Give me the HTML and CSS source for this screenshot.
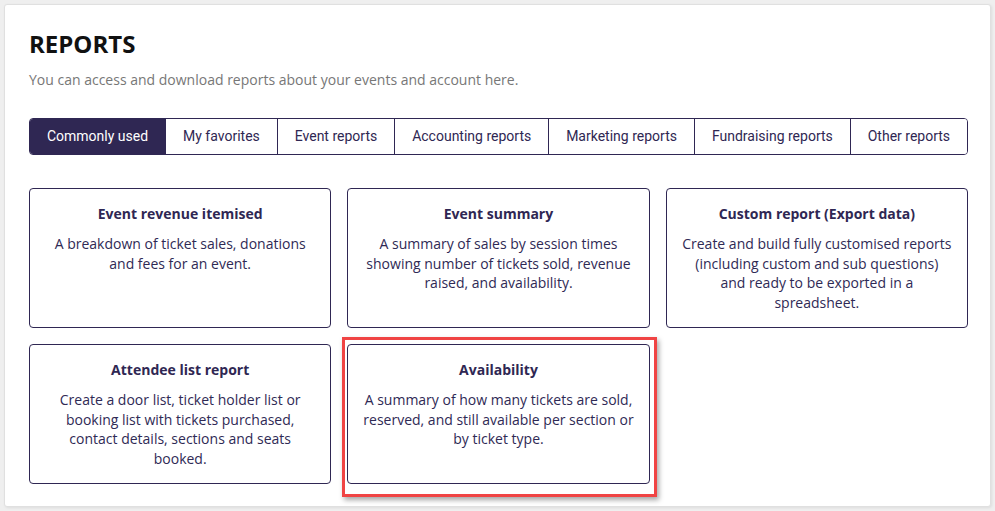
FILE: index.html
```html
<!DOCTYPE html>
<html lang="en">
<head>
    <meta charset="UTF-8">
    <meta name="viewport" content="width=device-width, initial-scale=1.0">
    <title>Reports</title>
    <link rel="stylesheet" href="styles.css">
</head>
<body>

    <div class="panel">
        <h1 class="page-title">REPORTS</h1>
        <p class="page-intro">You can access and download reports about your events and account here.</p>

        <div class="tabs">
            <button class="tab active">Commonly used</button>
            <button class="tab">My favorites</button>
            <button class="tab">Event reports</button>
            <button class="tab">Accounting reports</button>
            <button class="tab">Marketing reports</button>
            <button class="tab">Fundraising reports</button>
            <button class="tab">Other reports</button>
        </div>

        <div class="report-grid">
            <div class="report-card">
                <h3>Event revenue itemised</h3>
                <p>A breakdown of ticket sales, donations and fees for an event.</p>
            </div>
            <div class="report-card">
                <h3>Event summary</h3>
                <p>A summary of sales by session times showing number of tickets sold, revenue raised, and availability.</p>
            </div>
            <div class="report-card">
                <h3>Custom report (Export data)</h3>
                <p>Create and build fully customised reports (including custom and sub questions) and ready to be exported in a spreadsheet.</p>
            </div>
            <div class="report-card">
                <h3>Attendee list report</h3>
                <p>Create a door list, ticket holder list or booking list with tickets purchased, contact details, sections and seats booked.</p>
            </div>
            <div class="report-card highlighted">
                <h3>Availability</h3>
                <p>A summary of how many tickets are sold, reserved, and still available per section or by ticket type.</p>
            </div>
        </div>
    </div>

</body>
</html>
```

FILE: styles.css
```css
* {
    margin: 0;
    padding: 0;
    box-sizing: border-box;
}
body {
    font-family: 'Open Sans', sans-serif;
    background: #efefef;
    padding: 4px;
    height: 100vh;
    overflow: hidden;
}
.panel {
    background: #fff;
    border: 1px solid #e0e0e0;
    border-radius: 3px;
    box-shadow: 1px 1px 3px rgba(0, 0, 0, 0.08);
    padding: 23px 22px 22px 24px;
}
.page-title {
    font-size: 24px;
    line-height: 32px;
    font-weight: 700;
    color: #111;
}
.page-intro {
    margin-top: 10px;
    font-size: 14px;
    line-height: 20px;
    color: #777;
}

/* tab strip */
.tabs {
    display: flex;
    margin-top: 28px;
    border: 1px solid #2f2753;
    border-radius: 4px;
    overflow: hidden;
}
.tab {
    flex: 1 1 auto;
    padding: 8px 16px;
    font-family: 'Roboto', sans-serif;
    font-size: 14px;
    line-height: 19px;
    color: #2f2753;
    background: #fff;
    border: none;
    border-left: 1px solid #2f2753;
    cursor: pointer;
    white-space: nowrap;
}
.tab:first-child { border-left: none; }
.tab.active {
    background: #2f2753;
    color: #fff;
}

/* report cards */
.report-grid {
    display: grid;
    grid-template-columns: repeat(3, 1fr);
    gap: 16px;
    margin-top: 33px;
}
.report-card {
    position: relative;
    height: 140px;
    padding: 15px 14.6px;
    border: 1px solid #2f2753;
    border-radius: 4px;
    text-align: center;
    color: #2f2a55;
    cursor: pointer;
}
.report-card h3 {
    font-size: 14px;
    line-height: 20px;
    font-weight: 700;
    color: #2f2753;
}
.report-card p {
    margin-top: 10px;
    font-size: 14px;
    line-height: 19.7px;
}
.report-card.highlighted::after {
    content: "";
    position: absolute;
    top: -8px;
    left: -6px;
    right: -8px;
    bottom: -14px;
    border: 3px solid #f04444;
    box-shadow: 2px 3px 5px rgba(0, 0, 0, 0.35);
    pointer-events: none;
}
```
